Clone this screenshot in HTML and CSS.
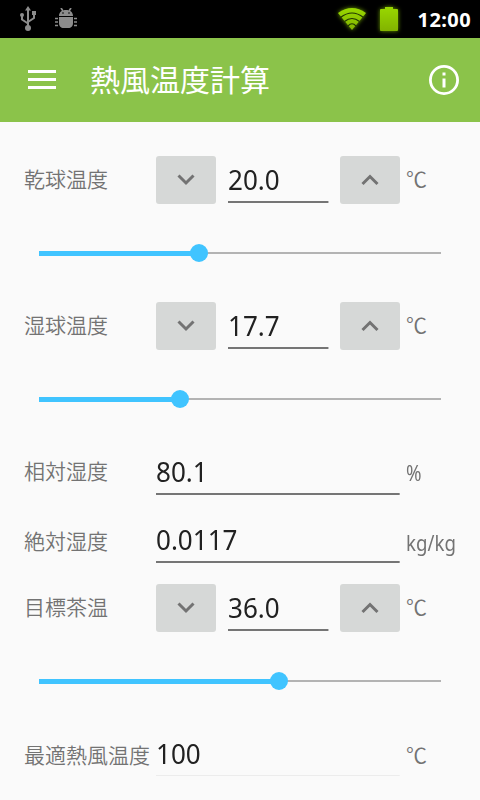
FILE: index.html
```
<!DOCTYPE html>
<html lang="ja">
<head>
    <meta charset="UTF-8">
    <meta name="viewport" content="width=device-width, initial-scale=1.0">
    <title>熱風温度計算</title>
    <link rel="stylesheet" href="styles.css">
</head>
<body>
    <div class="status-bar">
        <svg class="usb" width="18" height="26" viewBox="0 0 18 26" fill="none" stroke="#8c8c8c" stroke-width="2">
            <path d="M8 21V3M2 10v3.500l6 4M14 8v4l-6 4"/>
            <path d="M8 0l3 4.500H5zM12 5h4v4h-4z" fill="#8c8c8c" stroke="none"/>
            <circle cx="2" cy="9" r="2" fill="#8c8c8c" stroke="none"/>
            <circle cx="8" cy="22" r="3" fill="#8c8c8c" stroke="none"/>
        </svg>
        <svg class="debug" width="22" height="21" viewBox="0 0 22 21" fill="#8c8c8c">
            <path d="M4 8c0-4 3-6 7-6s7 2 7 6zM4 9h14v6c0 3.500-2 5-4.500 5h-5C6 20 4 18.500 4 15z"/>
            <path d="M6 0l2 3M16 0l-2 3M0 10.500h3M0 14h3M0 17.500h3M19 10.500h3M19 14h3M19 17.500h3" fill="none" stroke="#8c8c8c" stroke-width="1.700"/>
            <circle cx="8" cy="5" r="0.800" fill="#000"/>
            <circle cx="14" cy="5" r="0.800" fill="#000"/>
        </svg>
        <svg class="wifi glow" width="30" height="24" viewBox="0 0 30 24">
            <defs>
                <linearGradient id="green" x1="0" y1="0" x2="0" y2="1">
                    <stop offset="0" stop-color="#99d800"/>
                    <stop offset="1" stop-color="#82b300"/>
                </linearGradient>
            </defs>
            <path d="M1 6Q15-4 29 6L15 23z" fill="url(#green)"/>
            <path d="M3.500 10.500Q15 1.500 26.500 10.500M7.500 14.500Q15 8.500 22.500 14.500M11 19Q15 14.500 19 19" fill="none" stroke="#1f3500" stroke-width="1.200"/>
        </svg>
        <svg class="battery glow" width="18" height="24" viewBox="0 0 18 24">
            <path d="M5 2V0h8v2h4q1 0 1 1v20q0 1-1 1H1q-1 0-1-1V3q0-1 1-1z" fill="url(#green)"/>
        </svg>
        <span class="clock">12:00</span>
    </div>

    <header class="toolbar">
        <svg class="menu-icon" width="28" height="20" viewBox="0 0 28 20">
            <path d="M0 1.500h28M0 9.500h28M0 17.500h28" stroke="#fff" stroke-width="3"/>
        </svg>
        <h1 class="title">熱風温度計算</h1>
        <svg class="info-icon" width="30" height="30" viewBox="0 0 30 30">
            <circle cx="15" cy="15" r="13.600" fill="none" stroke="#fff" stroke-width="2.800"/>
            <path d="M13.500 7.500h3v3h-3zM13.500 13.500h3v9h-3z" fill="#fff"/>
        </svg>
    </header>

    <main class="content">
        <div class="row">
            <label class="label" for="dryBulb">乾球温度</label>
            <div class="field">
                <button class="step" type="button" data-target="dryBulb" data-step="-0.1"><svg width="18" height="12" viewBox="0 0 18 12"><path d="M1.500 1.500L9 9l7.500-7.500"/></svg></button>
                <input class="value" id="dryBulb" type="text" value="20.0">
                <button class="step" type="button" data-target="dryBulb" data-step="0.1"><svg width="18" height="12" viewBox="0 0 18 12"><path d="M1.500 10L9 2.500l7.500 7.500"/></svg></button>
            </div>
            <span class="unit celsius">℃</span>
        </div>
        <div class="slider">
            <div class="filled" style="width: 160px"></div>
            <div class="thumb"></div>
            <div class="track"></div>
        </div>

        <div class="row">
            <label class="label" for="wetBulb">湿球温度</label>
            <div class="field">
                <button class="step" type="button" data-target="wetBulb" data-step="-0.1"><svg width="18" height="12" viewBox="0 0 18 12"><path d="M1.500 1.500L9 9l7.500-7.500"/></svg></button>
                <input class="value" id="wetBulb" type="text" value="17.7">
                <button class="step" type="button" data-target="wetBulb" data-step="0.1"><svg width="18" height="12" viewBox="0 0 18 12"><path d="M1.500 10L9 2.500l7.500 7.500"/></svg></button>
            </div>
            <span class="unit celsius">℃</span>
        </div>
        <div class="slider">
            <div class="filled" style="width: 141px"></div>
            <div class="thumb"></div>
            <div class="track"></div>
        </div>

        <div class="row">
            <label class="label" for="relative">相対湿度</label>
            <div class="field"><input class="value wide" id="relative" type="text" value="80.1"></div>
            <span class="unit">%</span>
        </div>
        <div class="row absolute-row">
            <label class="label" for="absolute">絶対湿度</label>
            <div class="field"><input class="value wide" id="absolute" type="text" value="0.0117"></div>
            <span class="unit">kg/kg</span>
        </div>

        <div class="row">
            <label class="label" for="target">目標茶温</label>
            <div class="field">
                <button class="step" type="button" data-target="target" data-step="-0.1"><svg width="18" height="12" viewBox="0 0 18 12"><path d="M1.500 1.500L9 9l7.500-7.500"/></svg></button>
                <input class="value" id="target" type="text" value="36.0">
                <button class="step" type="button" data-target="target" data-step="0.1"><svg width="18" height="12" viewBox="0 0 18 12"><path d="M1.500 10L9 2.500l7.500 7.500"/></svg></button>
            </div>
            <span class="unit celsius">℃</span>
        </div>
        <div class="slider">
            <div class="filled" style="width: 240px"></div>
            <div class="thumb"></div>
            <div class="track"></div>
        </div>

        <div class="row result-row">
            <label class="label" for="result">最適熱風温度</label>
            <div class="field"><input class="value wide" id="result" type="text" value="100" readonly></div>
            <span class="unit celsius">℃</span>
        </div>
    </main>

    <script>
        document.querySelectorAll('.step').forEach(function(button) {
            button.addEventListener('click', function() {
                const input = document.getElementById(button.dataset.target);
                input.value = (parseFloat(input.value) + parseFloat(button.dataset.step)).toFixed(1);
            });
        });
    </script>
</body>
</html>
```
FILE: styles.css
```
* {
    box-sizing: border-box;
}
body {
    margin: 0;
    width: 480px;
    height: 800px;
    overflow: hidden;
    background: #fafafa;
    color: #737373;
    font-family: "Noto Sans", "Noto Sans CJK JP", sans-serif;
}
svg {
    display: block;
    flex: none;
}
.status-bar {
    display: flex;
    align-items: center;
    height: 38px;
    padding: 0 9px 0 20px;
    background: #000;
}
.debug {
    margin: 0 auto 1px 17px;
}
.wifi {
    margin-right: 13px;
}
.battery {
    margin-right: 20px;
}
.glow {
    overflow: visible;
    filter: drop-shadow(0 0 2px #6b9c00);
}
.clock {
    color: #fff;
    font-size: 20px;
    font-weight: bold;
    letter-spacing: 0.4px;
}
.toolbar {
    display: flex;
    align-items: center;
    height: 84px;
    padding: 0 21px 0 28px;
    background: #8bc34a;
}
.title {
    margin: 0 auto 0 34px;
    padding-bottom: 5px;
    color: #fff;
    font-family: "Noto Sans CJK JP", sans-serif;
    font-size: 30px;
    font-weight: 400;
    line-height: 40px;
}
.content {
    padding: 34px 0 0 24px;
}
.row {
    display: flex;
    align-items: center;
    height: 48px;
}
.label {
    width: 132px;
    padding-bottom: 4px;
    font-family: "Noto Sans CJK JP", sans-serif;
    font-size: 21px;
    font-weight: 350;
    line-height: 30px;
    white-space: nowrap;
}
.field {
    display: flex;
    gap: 12px;
    width: 244px;
    height: 48px;
}
/* narrow digits: the box is wider by the same factor, so it still fills its slot */
.value {
    flex: none;
    width: 107.5px;
    height: 47px;
    margin-right: -7.5px;
    padding: 0;
    border: none;
    border-bottom: 2px solid #757575;
    border-radius: 0;
    background: transparent;
    color: #212121;
    font-family: "Noto Sans", sans-serif;
    font-size: 28px;
    outline: none;
    transform: scaleX(0.93);
    transform-origin: left;
}
.wide {
    width: 262.4px;
    margin-right: 0;
}
.step {
    display: flex;
    align-items: center;
    justify-content: center;
    width: 60px;
    height: 48px;
    padding: 0;
    border: none;
    border-radius: 3px;
    background: #d6d8d7;
}
.step path {
    fill: none;
    stroke: #737373;
    stroke-width: 3;
}
.unit {
    margin-left: 6px;
    font-size: 22px;
    line-height: 30px;
    transform: scaleX(0.85);
    transform-origin: left;
}
.celsius {
    padding-bottom: 4px;
    font-family: "Noto Sans CJK JP", sans-serif;
    font-size: 21px;
    font-weight: 350;
    transform: none;
}
.slider {
    display: flex;
    align-items: center;
    height: 98px;
    padding: 0 39px 0 15px;
}
.filled {
    height: 5px;
    background: #40c4ff;
}
.thumb {
    z-index: 1;
    width: 18px;
    height: 18px;
    margin: 0 -9px;
    border-radius: 50%;
    background: #40c4ff;
}
.track {
    flex: 1;
    height: 2px;
    background: #b3b3b3;
}
.absolute-row {
    margin: 20px 0;
}
.absolute-row .label,
.absolute-row .unit {
    padding-top: 3px;
}
.result-row .label,
.result-row .unit {
    padding-top: 3px;
}
.result-row .value {
    height: 46px;
    border-bottom: 1px solid #ececec;
}
```
